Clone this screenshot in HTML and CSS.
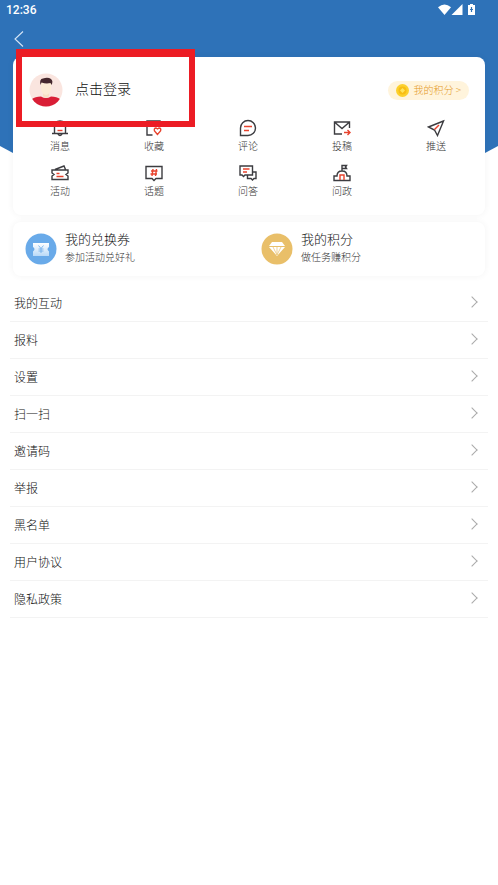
FILE: index.html
```html
<!DOCTYPE html>
<html lang="zh-CN">
<head>
<meta charset="utf-8">
<meta name="viewport" content="width=device-width, initial-scale=1">
<title>我的</title>
<link rel="stylesheet" href="styles.css">
</head>
<body>
<div class="backdrop"></div>
<header class="top">
  <div class="status">
    <span>12:36</span>
    <svg class="signals" width="40" height="12" viewBox="0 0 40 12" fill="#fff" aria-hidden="true">
      <path d="M0 3.2Q6.500-2 13 3.200L6.500 11Z"/><path d="M24.500 0V11H13.500Z"/>
      <path d="M32 0h3v1h2v10h-7V1h2Z"/><path d="M33.500 3v5M32 5.500h3" stroke="#2e72b8" stroke-width="1.200"/>
    </svg>
  </div>
  <nav class="nav">
    <button class="back" aria-label="返回"><svg width="10" height="16" viewBox="0 0 10 16"><path d="M9 .5 1 8l8 7.500" fill="none" stroke="#d6e6f7" stroke-width="1.100"/></svg></button>
  </nav>
</header>
<main>
  <section class="card profile">
    <div class="user">
      <button class="login">
        <svg width="34" height="34" viewBox="0 0 34 34" aria-hidden="true">
          <defs><clipPath id="face"><circle cx="17" cy="17" r="16.500"/></clipPath></defs>
          <g clip-path="url(#face)">
            <path fill="#fae5df" d="M0 0h34v34H0z"/>
            <path fill="#d91e36" d="M3 34V26q3-2.500 9-2.500 5 3 10 0 6 0 9 2.500v8Z"/>
            <path fill="#f8dfc4" d="M14 18h6v5q-3 4-6 0Z"/>
            <path fill="#fcebd4" d="M12 9h10v7q-.5 5-5 6-4.500-1-5-6Z"/>
            <path fill="#45282d" d="M11.500 12Q10 6 14 5.500q5-1.500 8 .5 2.500 2 .5 6l-1-2q-4.500 1-9-.5Z"/>
          </g>
        </svg>
        <span>点击登录</span>
      </button>
      <a class="points" href="#points">
        <svg width="13" height="13" viewBox="0 0 13 13" aria-hidden="true"><circle cx="6.500" cy="6.500" r="6.500" fill="#fcd02c"/><circle cx="6.500" cy="6.500" r="4" fill="#f8bd13"/><path d="m6.500 4 2.500 2.500L6.500 9 4 6.500Z" fill="#ffe45a"/></svg>
        <span>我的积分 &gt;</span>
      </a>
    </div>
    <nav class="tools">
      <a href="#message"><svg viewBox="0 0 18 18"><path d="M1 14.500h16M3.500 14V7.500Q3.500 2 9 2t5.500 5.500V14M7 15q2 3 4 0"/><path class="r" d="M6.500 11.500h5"/></svg>消息</a>
      <a href="#favorite"><svg viewBox="0 0 18 18"><path d="M7.500 16H2V2h13v5"/><path class="r" d="M12.500 15.500 9.500 12q-.8-3 1.500-3l1.500 1L14 9q2.500 0 1.500 3Z"/></svg>收藏</a>
      <a href="#comment"><svg viewBox="0 0 18 18"><path d="M1.500 16.500V9a7.500 7.500 0 1 1 7.500 7.500Z"/><path class="r" d="M5 7.500h8M5 11.500h5"/></svg>评论</a>
      <a href="#submit"><svg viewBox="0 0 18 18"><path d="M9 15H1.500V3h15v6M2 3.500l7 6 7-6"/><path class="r" d="M11 13.500h6M14.500 11l2.500 2.500-2.500 2.500"/></svg>投稿</a>
      <a href="#push"><svg viewBox="0 0 18 18"><path d="M16.500 2 1.500 8l6 3 3 5.500Z"/><path class="r" d="m7.500 10.500 4.500-4.500"/></svg>推送</a>
      <a href="#activity"><svg viewBox="0 0 18 18"><path d="M1 6h16v3l-2 1.500 2 1.500v3.500H1V12l2-1.500L1 9ZM4 5.500 13 2l1.500 3.500"/><path class="r" d="M5.500 9.500h3M5.500 12.500h7"/></svg>活动</a>
      <a href="#topic"><svg viewBox="0 0 18 18"><path d="M1 2.500h16v12h-6L9 16.500l-2-2H1Z"/><path class="r" d="M8 5 7 12M11.500 5l-1 7M6 7h6.500M5.500 10H12"/></svg>话题</a>
      <a href="#question"><svg viewBox="0 0 18 18"><path d="M1 2h12.500v9H6l-1.500 1.500L3 11H1ZM13.500 8H17v6.500h-2l-1.500 1.500-1.500-1.500H8.500V11"/><path class="r" d="M4 5h6.500M4 8h4"/></svg>问答</a>
      <a href="#politics"><svg viewBox="0 0 18 18"><path d="M1 16.500V12h3q0-5 5-5t5 5h3v4.500ZM9 7V1.500h4.500l-1 1.500 1 1.500H9"/><path class="r" d="M7 16v-5h4v5"/></svg>问政</a>
    </nav>
  </section>
  <section class="card benefits">
    <a href="#coupon">
      <svg width="32" height="32" viewBox="0 0 32 32" aria-hidden="true">
        <defs><linearGradient id="tk" x2="0" y2="1"><stop stop-color="#fff"/><stop offset="1" stop-color="#b9d9f8"/></linearGradient></defs>
        <circle cx="16" cy="16" r="15.500" fill="#69aae9"/><path fill="url(#tk)" d="M8 10h16v4q-3 2 0 4.500V23H8v-4.500q3-2.500 0-4.500Z"/><path d="m13.500 12.500 2.500 3 2.500-3M16 15.500V20M13.500 16h5M13.500 18h5" fill="none" stroke="#69aae9" stroke-width=".8"/>
      </svg>
      <span><strong>我的兑换券</strong><small>参加活动兑好礼</small></span>
    </a>
    <a href="#score">
      <svg width="32" height="32" viewBox="0 0 32 32" aria-hidden="true"><circle cx="16" cy="16" r="15.500" fill="#e9bf69"/><path fill="#fff" d="M11 9h10l3 4H8ZM8 14h16l-8 9Z"/><path d="m12 14 4 8 4-8M16 14v8" fill="none" stroke="#e9bf69" stroke-width=".7"/></svg>
      <span><strong>我的积分</strong><small>做任务赚积分</small></span>
    </a>
  </section>
  <nav>
    <ul class="menu">
      <li><a href="#interact">我的互动</a></li>
      <li><a href="#report">报料</a></li>
      <li><a href="#settings">设置</a></li>
      <li><a href="#scan">扫一扫</a></li>
      <li><a href="#invite">邀请码</a></li>
      <li><a href="#complain">举报</a></li>
      <li><a href="#blacklist">黑名单</a></li>
      <li><a href="#terms">用户协议</a></li>
      <li><a href="#privacy">隐私政策</a></li>
    </ul>
  </nav>
</main>
</body>
</html>
```
FILE: styles.css
```css
*, *::before, *::after { box-sizing: border-box; }
body {
  margin: 0;
  position: relative;
  background: #fff;
  color: #111;
  font-family: "Noto Sans CJK SC", sans-serif;
  font-weight: 300;
}
a { color: inherit; text-decoration: none; }
button { padding: 0; border: 0; background: none; color: inherit; font: inherit; cursor: pointer; }
svg { display: block; flex: none; }

/* Blue header shape that comes to a point behind the profile card */
.backdrop {
  position: absolute;
  inset: 0 0 auto;
  z-index: -1;
  height: 200px;
  background: #2e72b8;
  clip-path: polygon(0 0, 100% 0, 100% 146px, calc(100% - 26px) 160px, 26px 160px, 0 146px);
}
.status {
  display: flex;
  justify-content: space-between;
  align-items: center;
  height: 20px;
  padding: 0 20px 0 6px;
  color: #fff;
  font: 500 12px/20px Roboto, sans-serif;
}
.nav { display: flex; align-items: center; height: 37px; padding: 0 14px; }

.card { margin: 0 13px; background: #fff; border-radius: 8px; box-shadow: 0 0 6px 1px rgba(0, 0, 0, .04); }
.profile { position: relative; height: 158px; }
.user { display: flex; justify-content: space-between; align-items: center; height: 62px; padding: 4px 16px 0; }
.login { display: flex; align-items: center; gap: 12px; font-size: 14px; line-height: 20px; }
.login span { padding-bottom: 4px; }
/* Highlight frame around the login entry */
.login::after {
  content: "";
  position: absolute;
  top: -8px;
  left: 3px;
  width: 179px;
  height: 78px;
  border: 6px solid #ec1c24;
  border-top-width: 8px;
  pointer-events: none;
}
.points {
  display: flex;
  align-items: center;
  gap: 4px;
  height: 19px;
  padding: 0 8px;
  border-radius: 10px;
  background: #fff4dc;
  color: #e59a25;
  font-size: 10px;
}
.points span { padding-bottom: 2px; }
.tools { display: grid; grid-template-columns: repeat(5, 1fr); grid-auto-rows: 45px; padding-right: 2px; }
.tools a {
  display: flex;
  flex-direction: column;
  align-items: center;
  gap: 1px;
  font-size: 10px;
  line-height: 15px;
  color: #333;
}
.tools svg { width: 18px; height: 18px; fill: none; stroke: #3c3c40; stroke-width: 1.4; }
.tools .r { stroke: #e8432e; }

.benefits { display: grid; grid-template-columns: 1fr 1fr; height: 54px; margin-top: 7px; }
.benefits a { display: flex; align-items: center; gap: 8px; padding-left: 12px; }
.benefits span { padding-bottom: 2px; }
.benefits strong, .benefits small { display: block; font-weight: inherit; }
.benefits strong { font-size: 13px; line-height: 18px; }
.benefits small { font-size: 10px; line-height: 18px; color: #333; }

.menu { margin: 9px 10px 0; padding: 0; list-style: none; }
.menu a {
  display: flex;
  justify-content: space-between;
  align-items: center;
  height: 37px;
  padding: 0 12px 2px 4px;
  border-bottom: 1px solid #f3f3f3;
  font-size: 12px;
}
.menu a::after {
  content: "";
  width: 8px;
  height: 8px;
  border: solid #aaa;
  border-width: 1px 1px 0 0;
  transform: rotate(45deg);
}
```
